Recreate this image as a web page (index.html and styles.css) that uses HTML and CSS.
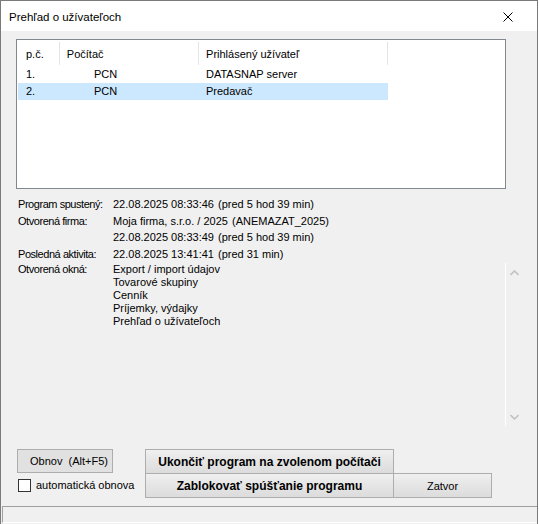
FILE: index.html
```html
<!DOCTYPE html>
<html lang="sk">
<head>
<meta charset="utf-8">
<title>Prehľad o užívateľoch</title>
<link rel="stylesheet" href="styles.css">
</head>
<body>
<div class="window">
  <div class="titlebar">
    <span class="title">Prehľad o užívateľoch</span>
    <svg class="close" width="10" height="10" viewBox="0 0 10 10"><path d="M0.5 0.5 L9.5 9.5 M9.5 0.5 L0.5 9.5" stroke="#000" stroke-width="1" fill="none"/></svg>
  </div>
  <div class="body">
    <div class="listbox">
      <div class="lv-row lv-head">
        <span class="c1">p.č.</span><span class="c2 hd">Počítač</span><span class="c3">Prihlásený užívateľ</span>
      </div>
      <div class="lv-row">
        <span class="c1">1.</span><span class="c2">PCN</span><span class="c3">DATASNAP server</span>
      </div>
      <div class="lv-row selected">
        <span class="c1">2.</span><span class="c2">PCN</span><span class="c3">Predavač</span>
      </div>
    </div>

    <div class="info">
      <span class="lbl">Program spustený:</span><span class="val">22.08.2025 08:33:46 <span class="gap"></span>(pred 5 hod 39 min)</span>
      <span class="lbl">Otvorená firma:</span><span class="val">Moja firma, s.r.o. / 2025 <span class="gap"></span>(ANEMAZAT_2025)</span>
      <span class="lbl"></span><span class="val">22.08.2025 08:33:49 <span class="gap"></span>(pred 5 hod 39 min)</span>
      <span class="lbl">Posledná aktivita:</span><span class="val">22.08.2025 13:41:41 <span class="gap"></span>(pred 31 min)</span>
      <span class="lbl memo-lbl">Otvorená okná:</span>
      <div class="memo">
        <div class="memo-text">
          <div>Export / import údajov</div>
          <div>Tovarové skupiny</div>
          <div>Cenník</div>
          <div>Príjemky, výdajky</div>
          <div>Prehľad o užívateľoch</div>
        </div>
        <div class="vscroll">
          <svg width="9" height="6" viewBox="0 0 9 6"><path d="M0.5 5 L4.5 1 L8.5 5" stroke="#c2c2c2" stroke-width="1.6" fill="none"/></svg>
          <svg width="9" height="6" viewBox="0 0 9 6"><path d="M0.5 1 L4.5 5 L8.5 1" stroke="#c2c2c2" stroke-width="1.6" fill="none"/></svg>
        </div>
      </div>
    </div>

    <div class="actions">
      <div class="left-col">
        <button class="btn btn-obnov">Obnov&nbsp;&nbsp;(Alt+F5)</button>
        <label class="check"><span class="box"></span>automatická obnova</label>
      </div>
      <div class="mid-col">
        <button class="btn btn-bold">Ukončiť program na zvolenom počítači</button>
        <button class="btn btn-bold btn-second">Zablokovať spúšťanie programu</button>
      </div>
      <button class="btn btn-close">Zatvor</button>
    </div>
  </div>
  <div class="statusbar"></div>
</div>
</body>
</html>
```

FILE: styles.css
```css
* { box-sizing: border-box; }

html, body {
  margin: 0;
  padding: 0;
  background: #ffffff;
}

body {
  font-family: "Liberation Sans", Arial, sans-serif;
  font-size: 11px;
  color: #000;
}

.window {
  width: 538px;
  height: 524px;
  border: 1px solid #7a7a7a;
  border-bottom: none;
  background: #f0f0f0;
  display: flex;
  flex-direction: column;
  overflow: hidden;
}

.titlebar {
  height: 30px;
  flex: none;
  background: #fff;
  display: flex;
  align-items: center;
  justify-content: space-between;
  padding: 0 24px 0 8px;
}

.title {
  font-family: "Liberation Sans", Arial, sans-serif;
  font-size: 11.5px;
  color: #000;
  margin-top: 1px;
}

.close { display: block; margin-top: 1px; }

.body {
  flex: 1;
  display: flex;
  flex-direction: column;
  padding: 8px 0 0 0;
}

/* list view */
.listbox {
  margin-left: 15px;
  width: 490px;
  height: 150px;
  border: 1px solid #828790;
  background: #fff;
  padding-top: 1px;
  flex: none;
}

.lv-row {
  display: flex;
  height: 17px;
  line-height: 17px;
  margin-left: 1px;
  width: 370px;
  white-space: nowrap;
}

.lv-head {
  height: 25px;
  line-height: 25px;
  padding-top: 1px;
}

.lv-row .c1 { width: 41px; padding-left: 8px; }
.lv-row .c2 { width: 140px; padding-left: 35px; }
.lv-row .c3 { width: 189px; padding-left: 7px; }

.lv-head .c2 { padding-left: 7px; }
.lv-head .c2, .lv-head .c3 {
  border-left: 1px solid #e5e5e5;
}
.lv-head .c3 { border-right: 1px solid #e5e5e5; width: 191px; }
.lv-head span { height: 23px; }

.lv-row.selected { background: #cce8ff; }

/* info block */
.info {
  margin-top: 7px;
  padding-left: 17px;
  display: grid;
  grid-template-columns: 95px 408px;
  grid-auto-rows: 16.5px;
  line-height: 16.5px;
  white-space: nowrap;
}

.lbl { letter-spacing: -0.45px; }

.gap { display: inline-block; width: 1px; }

.memo-lbl {
  line-height: 13px;
  padding-top: 0.5px;
}

.memo {
  grid-row: span 10;
  height: 164px;
  display: flex;
  line-height: 13px;
  padding-top: 0.5px;
}

.memo-text { flex: 1; }

.vscroll {
  width: 16px;
  height: 163px;
  border-left: 1px solid #ffffff;
  display: flex;
  flex-direction: column;
  justify-content: space-between;
  align-items: center;
  padding: 7px 0 6px 2px;
}
.vscroll svg { display: block; }

/* buttons */
.actions {
  margin-top: 22px;
  padding-left: 16px;
  display: flex;
  align-items: flex-end;
}

.btn {
  font-family: "Liberation Sans", Arial, sans-serif;
  font-size: 11px;
  color: #000;
  border: 1px solid #adadad;
  background: #e1e1e1;
  padding: 0;
  margin: 0;
  display: block;
  text-align: center;
}

.left-col {
  width: 128px;
  align-self: flex-start;
}

.btn-obnov {
  width: 96px;
  height: 24px;
  padding-left: 8px;
}

.check {
  display: flex;
  align-items: center;
  margin-top: 6px;
  margin-left: 1px;
  height: 13px;
  line-height: 13px;
}

.box {
  width: 13px;
  height: 13px;
  border: 1px solid #333;
  background: #fff;
  margin-right: 5px;
  flex: none;
}

.mid-col {
  width: 249px;
}

.btn-bold {
  width: 249px;
  height: 25px;
  font-size: 12px;
  font-weight: bold;
  background: linear-gradient(#f0f0f0 0%, #e6e6e6 45%, #dcdcdc 100%);
  padding-top: 1px;
}

.btn-second { margin-top: -1px; }

.btn-close {
  width: 99px;
  height: 25px;
  margin-left: -1px;
  background: linear-gradient(#f0f0f0 0%, #e6e6e6 45%, #dcdcdc 100%);
}

.statusbar {
  flex: none;
  height: 17px;
  margin: 0 0 1px 1px;
  border-top: 1px solid #a0a0a0;
  border-left: 1px solid #a0a0a0;
  border-bottom: 1px solid #ffffff;
  background: #f0f0f0;
}
```
